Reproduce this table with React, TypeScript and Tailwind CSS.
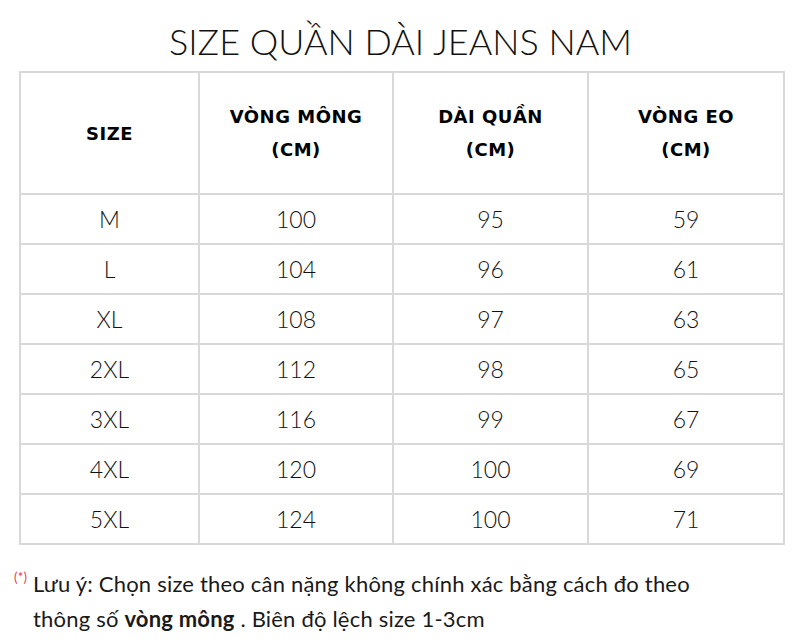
const rows = [
  ["M", "100", "95", "59"],
  ["L", "104", "96", "61"],
  ["XL", "108", "97", "63"],
  ["2XL", "112", "98", "65"],
  ["3XL", "116", "99", "67"],
  ["4XL", "120", "100", "69"],
  ["5XL", "124", "100", "71"],
]

const headers = [["SIZE"], ["VÒNG MÔNG", "(CM)"], ["DÀI QUẦN", "(CM)"], ["VÒNG EO", "(CM)"]]

const cellBorder = "border-2 border-[#d9d9d9]"

export default function App() {
  return (
    <div className="h-[643px] w-[801px] bg-white text-[#111] [font-family:Lato,'Open_Sans',sans-serif]">
      <h1 className="pt-[20px] text-center text-[36px] font-light leading-[42px] text-[#111]">
        SIZE QUẦN DÀI JEANS NAM
      </h1>

      <table className="ml-[19px] mt-[9px] w-[764px] table-fixed border-collapse">
        <colgroup>
          <col className="w-[179px]" />
          <col className="w-[194px]" />
          <col className="w-[195px]" />
          <col className="w-[196px]" />
        </colgroup>
        <thead>
          <tr className="h-[122px]">
            {headers.map((h) => (
              <th
                key={h[0]}
                className={`${cellBorder} text-center align-middle text-[18px] font-bold leading-[33px] tracking-[0.5px] text-black [font-family:'DejaVu_Sans',sans-serif]`}
              >
                {h.map((line) => (
                  <div key={line}>{line}</div>
                ))}
              </th>
            ))}
          </tr>
        </thead>
        <tbody>
          {rows.map((r) => (
            <tr key={r[0]} className="h-[50px]">
              {r.map((v, i) => (
                <td key={i} className={`${cellBorder} text-center align-middle text-[23px] font-light leading-none`}>
                  {v}
                </td>
              ))}
            </tr>
          ))}
        </tbody>
      </table>

      <div className="mt-[21px] pl-[14px] text-[22px] leading-[35px] tracking-[0.2px] text-[#1a1a1a]">
        <p className="flex">
          <span className="-mt-[6px] w-[19px] text-[13px] text-[#e0405a]">(*)</span>
          <span>Lưu ý: Chọn size theo cân nặng không chính xác bằng cách đo theo</span>
        </p>
        <p className="pl-[19px]">
          thông số <b className="font-bold">vòng mông</b> . Biên độ lệch size 1-3cm
        </p>
      </div>
    </div>
  )
}
